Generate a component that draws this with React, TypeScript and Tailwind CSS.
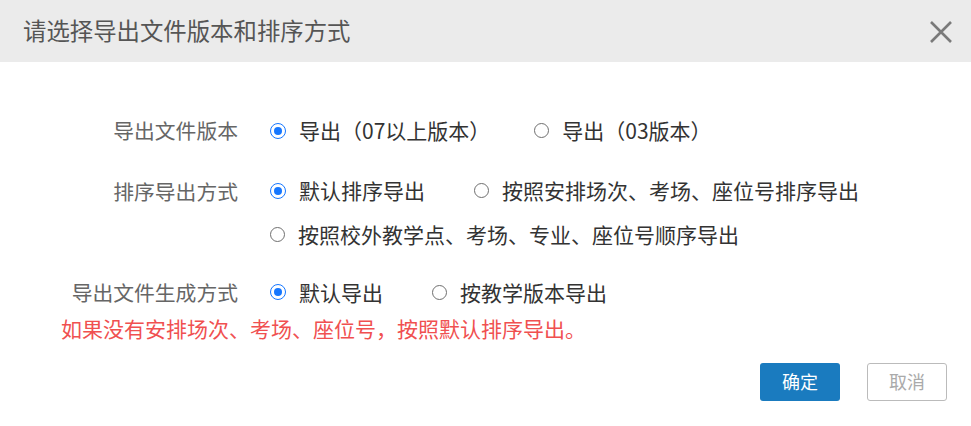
import React from "react";

function Radio({ checked }: { checked?: boolean }) {
  return checked ? (
    <span className="inline-flex h-[16px] w-[16px] shrink-0 items-center justify-center rounded-full border-[1.5px] border-[#1677ff] bg-white">
      <span className="h-[8px] w-[8px] rounded-full bg-[#1677ff]" />
    </span>
  ) : (
    <span className="inline-block h-[15px] w-[15px] shrink-0 rounded-full border border-[#6f6f6f] bg-white" />
  );
}

function Option({ label, checked, mr = "mr-[49px]" }: { label: string; checked?: boolean; mr?: string }) {
  return (
    <label className={`flex items-center ${mr}`}>
      <Radio checked={checked} />
      <span className="ml-[13px] text-[21px] text-[#333]">{label}</span>
    </label>
  );
}

export default function App() {
  return (
    <div
      className="h-[426px] w-[971px] bg-white"
      style={{ fontFamily: '"Noto Sans CJK SC", "Noto Sans", sans-serif' }}
    >
      <div className="flex h-[62px] items-center justify-between bg-[#ebebeb] pl-[23px] pr-[19px]">
        <span className="text-[23.4px] text-[#555]">请选择导出文件版本和排序方式</span>
        <svg width="22" height="22" viewBox="0 0 22 22" className="mt-[2px]">
          <path d="M1 1 L21 21 M21 1 L1 21" stroke="#7a7a7a" strokeWidth="2.6" />
        </svg>
      </div>

      <div className="pt-[53px]">
        <div className="flex items-center">
          <div className="w-[238px] text-right text-[20.8px] text-[#666]">导出文件版本</div>
          <div className="ml-[32px] flex items-center">
            <Option label="导出（07以上版本）" checked mr="mr-[44px]" />
            <Option label="导出（03版本）" />
          </div>
        </div>

        <div className="mt-[29px] flex items-start">
          <div className="w-[238px] text-right text-[20.8px] text-[#666] leading-[30px]">排序导出方式</div>
          <div className="ml-[32px] flex flex-col gap-[14px]">
            <div className="flex h-[30px] items-center">
              <Option label="默认排序导出" checked />
              <Option label="按照安排场次、考场、座位号排序导出" />
            </div>
            <div className="flex h-[30px] items-center">
              <Option label="按照校外教学点、考场、专业、座位号顺序导出" />
            </div>
          </div>
        </div>

        <div className="mt-[27px] flex items-center">
          <div className="w-[238px] text-right text-[20.8px] text-[#666]">导出文件生成方式</div>
          <div className="ml-[32px] flex items-center">
            <Option label="默认导出" checked />
            <Option label="按教学版本导出" />
          </div>
        </div>

        <div className="mt-[5px] pl-[61px] text-[21px] text-[#f05050]">
          如果没有安排场次、考场、座位号，按照默认排序导出。
        </div>

        <div className="mt-[18px] flex justify-end gap-[27px] pr-[24px]">
          <button className="h-[38px] w-[80px] rounded-[3px] bg-[#1a7bbf] text-[18px] text-white">确定</button>
          <button className="h-[38px] w-[80px] rounded-[3px] border border-[#bbb] bg-white text-[18px] text-[#aaa]">取消</button>
        </div>
      </div>
    </div>
  );
}
